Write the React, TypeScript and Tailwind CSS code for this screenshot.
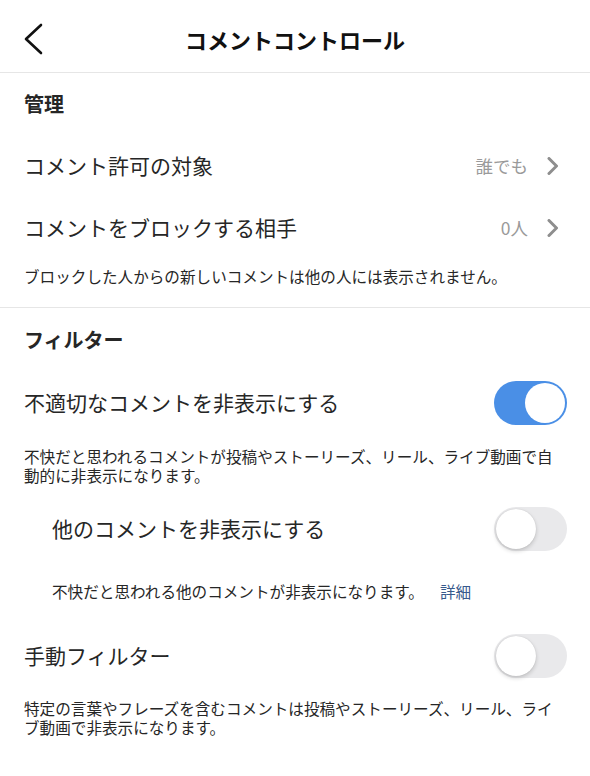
import React from 'react'

const font = { fontFamily: '"Noto Sans CJK JP", "Noto Sans", sans-serif' }

function Toggle({ on }: { on: boolean }) {
  return (
    <div
      className={`relative w-[73px] h-[44px] rounded-full shrink-0 ${
        on ? 'bg-[#4a8fe6]' : 'bg-[#e9e9eb]'
      }`}
    >
      <div
        className={`absolute top-[2px] w-[40px] h-[40px] rounded-full bg-white ${
          on ? 'right-[2px]' : 'left-[2px] shadow-[0_2px_4px_rgba(0,0,0,0.18),0_0_1px_rgba(0,0,0,0.15)]'
        }`}
      />
    </div>
  )
}

function Chevron() {
  return (
    <svg width="14" height="18" viewBox="0 0 14 18" className="ml-[18px]">
      <path d="M3 1.5 L10.5 9 L3 16.5" fill="none" stroke="#8e8e8e" strokeWidth="3" strokeLinecap="round" strokeLinejoin="round" />
    </svg>
  )
}

function NavRow({ label, value }: { label: string; value: string }) {
  return (
    <div className="h-[62px] flex items-center pl-6 pr-[30px]">
      <span className="flex-1 text-[21px] text-[#262626]">{label}</span>
      <span className="text-[17.5px] text-[#9a9a9a]">{value}</span>
      <Chevron />
    </div>
  )
}

function ToggleRow({ label, on, indent }: { label: string; on: boolean; indent?: boolean }) {
  return (
    <div className={`h-[62px] flex items-center pr-[23px] ${indent ? 'pl-[52px]' : 'pl-6'}`}>
      <span className="flex-1 text-[21px] text-[#262626]">{label}</span>
      <Toggle on={on} />
    </div>
  )
}

export default function App() {
  return (
    <div className="w-[590px] h-[776px] bg-white overflow-hidden" style={font}>
      <div className="relative h-[73px] flex items-center justify-center pt-[6px] border-b border-[#e6e6e6]">
        <svg width="22" height="32" viewBox="0 0 22 32" className="absolute left-[22px] top-[23px]">
          <path d="M19 2 L4 16 L19 30" fill="none" stroke="#111" strokeWidth="2.6" strokeLinecap="round" strokeLinejoin="round" />
        </svg>
        <h1 className="text-[22px] font-bold text-[#111]">コメントコントロール</h1>
      </div>

      <div className="h-[62px] flex items-center px-6">
        <h2 className="text-[20px] font-bold text-[#262626]">管理</h2>
      </div>
      <NavRow label="コメント許可の対象" value="誰でも" />
      <NavRow label="コメントをブロックする相手" value="0人" />
      <div className="h-[48px] px-6 pt-[8px] text-[15.6px] leading-[19px] text-[#262626]">
        ブロックした人からの新しいコメントは他の人には表示されません。
      </div>
      <div className="h-px bg-[#e6e6e6]" />

      <div className="h-[64px] flex items-center px-6">
        <h2 className="text-[20px] font-bold text-[#262626]">フィルター</h2>
      </div>
      <ToggleRow label="不適切なコメントを非表示にする" on />
      <div className="px-6 pt-[13px] pb-[13px] text-[15.6px] leading-[19px] text-[#262626]">
        不快だと思われるコメントが投稿やストーリーズ、リール、ライブ動画で自動的に非表示になります。
      </div>
      <ToggleRow label="他のコメントを非表示にする" on={false} indent />
      <div className="h-[65px] pl-[52px] pr-6 pt-[22px] text-[15.6px] leading-[19px] text-[#262626]">
        不快だと思われる他のコメントが非表示になります。
        <span className="ml-[16px] text-[#385a8c]">詳細</span>
      </div>
      <ToggleRow label="手動フィルター" on={false} />
      <div className="px-6 pt-[12px] text-[15.6px] leading-[19px] text-[#262626]">
        特定の言葉やフレーズを含むコメントは投稿やストーリーズ、リール、ライブ動画で非表示になります。
      </div>
    </div>
  )
}
